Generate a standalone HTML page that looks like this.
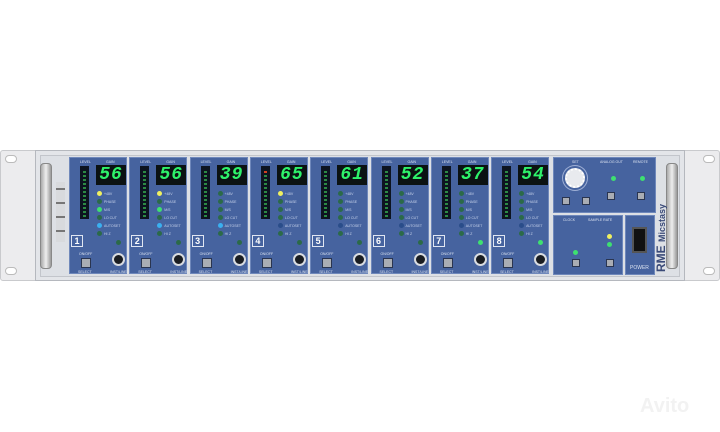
<!DOCTYPE html>
<html><head><style>
*{margin:0;padding:0;box-sizing:border-box}
body{width:720px;height:432px;background:#fff;position:relative;overflow:hidden;font-family:"Liberation Sans",sans-serif}
.a{position:absolute}
.ch{position:absolute;top:157px;width:58px;height:117px;background:#46639f;border:1px solid #6f88bb}
.meter{position:absolute;left:10px;top:8px;width:9px;height:53px;background:#0d1420}
.seg{position:absolute;left:3px;width:3px;height:2px;background:#1f7a3a}
.disp{position:absolute;left:26px;top:7px;width:30px;height:20px;background:#0b1212;color:#2ef26a;font:bold 18px/20px "Liberation Mono",monospace;text-align:center;letter-spacing:1px;font-style:italic}
.led{position:absolute;left:27px;width:5px;height:5px;border-radius:50%;background:#2b6a48}
.lbl{position:absolute;left:34px;font-size:3.5px;color:#c7d2ea}
.num{position:absolute;left:1px;top:77px;width:12px;height:12px;border:1px solid #e0e6f2;color:#fff;font:bold 9px/10px "Liberation Sans";text-align:center}
.btn{position:absolute;left:11px;top:100px;width:10px;height:10px;background:#a9adb4;border:1px solid #2a3550}
.knob{position:absolute;left:42px;top:95px;width:13px;height:13px;border-radius:50%;background:#1a1d22;border:2px solid #d8dbe0}
.tx{position:absolute;font-size:3.5px;color:#dbe2f0}
</style></head><body>
<!-- ears -->
<div class="a" style="left:0;top:150px;width:40px;height:131px;background:#ececee;border:1px solid #c9cacd;border-radius:3px"></div>
<div class="a" style="left:5px;top:155px;width:12px;height:8px;border-radius:4px;background:#fff;border:1px solid #bbb"></div>
<div class="a" style="left:5px;top:267px;width:12px;height:8px;border-radius:4px;background:#fff;border:1px solid #bbb"></div>
<div class="a" style="left:680px;top:150px;width:40px;height:131px;background:#ececee;border:1px solid #c9cacd;border-radius:3px"></div>
<div class="a" style="left:703px;top:155px;width:12px;height:8px;border-radius:4px;background:#fff;border:1px solid #bbb"></div>
<div class="a" style="left:703px;top:267px;width:12px;height:8px;border-radius:4px;background:#fff;border:1px solid #bbb"></div>
<!-- chassis -->
<div class="a" style="left:35px;top:150px;width:650px;height:131px;background:#e3e5e9;border:1px solid #b5b8be"></div>
<div class="a" style="left:40px;top:155px;width:640px;height:122px;background:#dde0e5;border:1px solid #c2c5cb"></div>
<!-- handles -->
<div class="a" style="left:40px;top:163px;width:12px;height:106px;background:linear-gradient(90deg,#aaa,#eee,#999);border-radius:4px;border:1px solid #888"></div>
<div class="a" style="left:666px;top:163px;width:12px;height:106px;background:linear-gradient(90deg,#aaa,#eee,#999);border-radius:4px;border:1px solid #888"></div>
<div class="a" style="left:56px;top:182px;width:9px;height:60px;background:repeating-linear-gradient(#d8dadd 0 6px,#777 6px 8px,#d8dadd 8px 14px)"></div>
<div id="chs"></div>
<!-- right sections -->
<div class="a" style="left:553px;top:157px;width:103px;height:56px;background:#46639f;border:1px solid #6f88bb"></div>
<div class="a" style="left:565px;top:168px;width:20px;height:20px;border-radius:50%;background:#e8eaee;border:2px dotted #fff;box-shadow:0 0 0 2px #46639f,0 0 0 3px #9fb0d6"></div>
<div class="a btn" style="left:562px;top:197px;width:8px;height:8px"></div>
<div class="a btn" style="left:582px;top:197px;width:8px;height:8px"></div>
<div class="a btn" style="left:607px;top:192px;width:8px;height:8px"></div>
<div class="a btn" style="left:637px;top:192px;width:8px;height:8px"></div>
<div class="a led" style="left:611px;top:176px;background:#3ee070"></div>
<div class="a led" style="left:640px;top:176px;background:#3ee070"></div>
<div class="a tx" style="left:572px;top:160px">SET</div>
<div class="a tx" style="left:600px;top:160px">ANALOG OUT</div>
<div class="a tx" style="left:633px;top:160px">REMOTE</div>
<div class="a" style="left:553px;top:215px;width:70px;height:60px;background:#46639f;border:1px solid #6f88bb"></div>
<div class="a tx" style="left:563px;top:218px">CLOCK</div>
<div class="a tx" style="left:588px;top:218px">SAMPLE RATE</div>
<div class="a led" style="left:573px;top:250px;background:#3ee070"></div>
<div class="a led" style="left:607px;top:234px;background:#f0f060"></div>
<div class="a led" style="left:607px;top:242px;background:#3ee070"></div>
<div class="a btn" style="left:572px;top:259px;width:8px;height:8px"></div>
<div class="a btn" style="left:606px;top:259px;width:8px;height:8px"></div>
<div class="a" style="left:625px;top:215px;width:30px;height:60px;background:#46639f;border:1px solid #6f88bb"></div>
<div class="a" style="left:632px;top:227px;width:15px;height:26px;background:#111;border:2px solid #555"></div>
<div class="a tx" style="left:630px;top:265px;font-size:5px">POWER</div>
<div class="a" style="left:648px;top:212px;font:bold 12px 'Liberation Sans';color:#3a4a78;transform:rotate(-90deg);transform-origin:0 0;white-space:nowrap;top:272px;left:654px">RME <span style="font-size:9px">Micstasy</span></div>
<div class="a" style="left:640px;top:395px;font:bold 20px 'Liberation Sans';color:#f2f2f2">Avito</div>
<script>
var v=[56,56,39,65,61,52,37,54],h='';
var L=['+48V','PHASE','M/S','LO CUT','AUTOSET','HI Z'],C=['#2b6a48','#2b6a48','#2b6a48','#2b6a48','#2b6a48','#2b6a48'];
for(var i=0;i<8;i++){
 var x=69+i*60.3;var s='';
 for(var k=0;k<12;k++)s+='<div class="seg" style="top:'+(5+k*4)+'px;background:'+(k==0&&i==3?'#d04020':'#2c8a44')+'"></div>';
 var leds='';
 for(var k=0;k<6;k++){var c=C[k];if(k==0&&(i<2||i==3))c='#f0f060';if(k==2&&i<2)c='#3ee070';if(k==4&&(i<3))c='#3ab0f0';if(k==4&&i>=3)c='#2a4d8a';
 leds+='<div class="led" style="top:'+(33+k*8)+'px;background:'+c+'"></div><div class="lbl" style="top:'+(34+k*8)+'px">'+L[k]+'</div>';}
 h+='<div class="ch" style="left:'+x+'px"><div class="tx" style="left:10px;top:2px">LEVEL</div><div class="tx" style="left:36px;top:2px">GAIN</div><div class="meter">'+s+'</div><div class="disp">'+v[i]+'</div>'+leds+
 '<div class="led" style="left:46px;top:82px;background:'+(i>5?'#3ee070':'#2b6a48')+'"></div><div class="num">'+(i+1)+'</div><div class="tx" style="left:9px;top:94px">ON/OFF</div><div class="btn"></div><div class="tx" style="left:8px;top:112px">SELECT</div><div class="knob"></div><div class="tx" style="left:40px;top:112px">INST/LINE</div></div>';
}
document.getElementById('chs').innerHTML=h;
</script>
</body></html>
